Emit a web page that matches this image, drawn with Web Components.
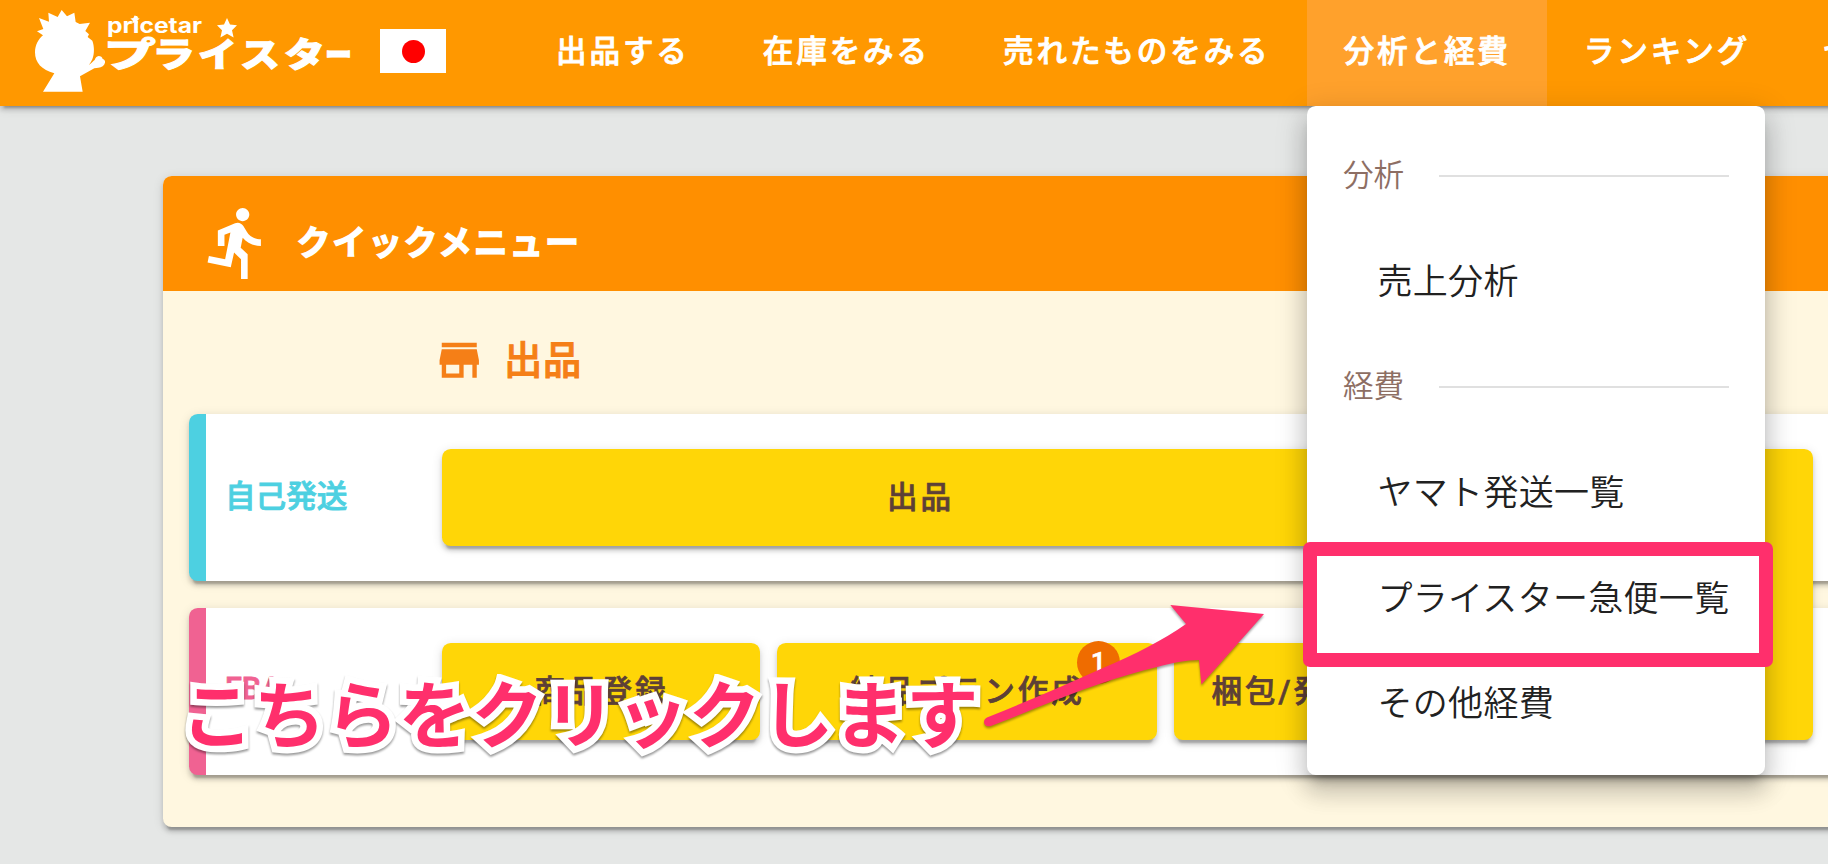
<!DOCTYPE html>
<html lang="ja">
<head>
<meta charset="utf-8">
<title>プライスター</title>
<style>
    html, body {
        margin: 0;
        height: 100%;
        overflow: hidden;
    }
    body {
        background-color: #e5e7e6;
        font-family: Roboto, "Noto Sans CJK JP", sans-serif;
        --accent: #ff2f6c;
        --scale-shadow: 0 6.5px 2px -4.4px rgba(0,0,0,.2), 0 4.4px 4.4px rgba(0,0,0,.14), 0 2px 11px rgba(0,0,0,.12);
    }
</style>
</head>
<body>
<price-app></price-app>

<script>
class PriceLogoComponent extends HTMLElement
{
    constructor()
    {
        super();
        this.shadow = this.attachShadow({mode: "open" })
    }
    connectedCallback()
    {
        this.render();
    }
    style ()
    {
        return `
            <style>
                :host {
                    display: flex;
                    align-items: flex-start;
                    gap: 28px;
                    width: 519px;
                    flex: none;
                }
                .logo {
                    display: block;
                    width: 352px;
                    height: 106px;
                }
                .flag {
                    display: flex;
                    align-items: center;
                    justify-content: center;
                    width: 66px;
                    height: 44px;
                    margin-top: 29px;
                    background-color: #ffffff;
                }
                .flag i {
                    width: 23px;
                    height: 23px;
                    border-radius: 50%;
                    background-color: #ff0000;
                }
            </style>
        `;
    }
    render()
    {
        this.shadow.innerHTML = `
            ${this.style()}
            <svg class="logo" viewBox="0 0 352 106" fill="#ffffff">
                <path transform="translate(25 0) scale(.3333)" d="M54 275L88 220C50 210 30 188 30 157C30 136 40 118 54 106L36 94L55 87L42 54L72 65L70 38L98 51L110 30L126 49L148 38L152 66L164 72L195 68L181 93L192 103L188 111L202 122C208 138 209 160 202 178C196 192 186 203 176 208L200 188C205 184 206 182 209 180C211 174 215 169 221 168C227 168 232 172 233 177C239 179 241 183 240 188C238 197 230 202 220 203L208 205L165 229L173 275Z"/>
                <text x="107" y="32.5" font-family="Inter, sans-serif" font-weight="700" font-size="20.5" textLength="95" lengthAdjust="spacingAndGlyphs">pricetar</text>
                <path d="M135 15l1.500 3 3.200.4-2.300 2.100.5 3-2.900-1.400-2.800 1.400.5-3-2.300-2.100 3.100-.4z"/>
                <path d="M227 18l3 6.600 7 .6-5 5 1.600 7.400-6.600-3.800-6.600 3.800 1.600-7.400-5-5 7-.6z"/>
                <text y="67" font-family="'Noto Sans CJK JP', sans-serif" font-weight="900" font-size="34" stroke="#ffffff" stroke-width="1"><tspan x="104" textLength="52" lengthAdjust="spacingAndGlyphs">プ</tspan><tspan x="152" textLength="43" lengthAdjust="spacingAndGlyphs">ラ</tspan><tspan x="198" textLength="39" lengthAdjust="spacingAndGlyphs">イ</tspan><tspan x="240" textLength="40" lengthAdjust="spacingAndGlyphs">ス</tspan><tspan x="284" textLength="41" lengthAdjust="spacingAndGlyphs">タ</tspan><tspan x="325" textLength="27" lengthAdjust="spacingAndGlyphs">ー</tspan></text>
            </svg>
            <div class="flag"><i></i></div>
        `
    }
}
customElements.define('price-logo', PriceLogoComponent);

class NavTabComponent extends HTMLElement
{
    constructor()
    {
        super();
        this.shadow = this.attachShadow({mode: "open" })
    }
    connectedCallback()
    {
        this.render();
    }
    style ()
    {
        return `
            <style>
                :host {
                    display: flex;
                    flex: none;
                    box-sizing: border-box;
                    height: 106px;
                    padding: 0 36px 9px 37px;
                    align-items: center;
                    color: #ffffff;
                    font-size: 30.6px;
                    font-weight: 500;
                    letter-spacing: 2.85px;
                    white-space: nowrap;
                    -webkit-text-stroke: .8px currentColor;
                }
                :host([active]) {
                    background-color: #ffa12c;
                }
            </style>
        `;
    }
    render()
    {
        this.shadow.innerHTML = `
            ${this.style()}
            <slot></slot>
        `
    }
}
customElements.define('nav-tab', NavTabComponent);

class AppHeaderComponent extends HTMLElement
{
    constructor()
    {
        super();
        this.shadow = this.attachShadow({mode: "open" })
    }
    connectedCallback()
    {
        this.render();
    }
    style ()
    {
        return `
            <style>
                :host {
                    display: flex;
                    width: calc(100% + 12px);
                    height: 106px;
                    background-color: #ff9800;
                    box-shadow: var(--scale-shadow);
                }
            </style>
        `;
    }
    render()
    {
        this.shadow.innerHTML = `
            ${this.style()}
            <price-logo></price-logo>
            <slot></slot>
        `
    }
}
customElements.define('app-header', AppHeaderComponent);

class QuickButtonComponent extends HTMLElement
{
    constructor()
    {
        super();
        this.shadow = this.attachShadow({mode: "open" })
    }
    connectedCallback()
    {
        this.render();
    }
    style ()
    {
        return `
            <style>
                :host {
                    display: flex;
                    position: relative;
                    flex: none;
                    box-sizing: border-box;
                    height: 97px;
                    padding: 0 0 6px 1px;
                    align-items: center;
                    justify-content: center;
                    border-radius: 8.7px;
                    background-color: #ffd607;
                    color: #5d4037;
                    font-size: 30.6px;
                    font-weight: 500;
                    letter-spacing: 2.9px;
                    white-space: nowrap;
                    -webkit-text-stroke: .7px currentColor;
                    box-shadow: var(--scale-shadow);
                }
                .badge {
                    position: absolute;
                    top: -2px;
                    right: 37px;
                    width: 43px;
                    height: 43px;
                    border-radius: 50%;
                    background-color: #ef6c00;
                    color: #ffffff;
                    font-size: 26px;
                    line-height: 42px;
                    letter-spacing: 0;
                    text-align: center;
                }
            </style>
        `;
    }
    render()
    {
        const badge = this.getAttribute('badge');
        this.shadow.innerHTML = `
            ${this.style()}
            <slot></slot>
            ${badge ? `<div class="badge">${badge}</div>` : ''}
        `
    }
}
customElements.define('quick-button', QuickButtonComponent);

class QuickRowComponent extends HTMLElement
{
    constructor()
    {
        super();
        this.shadow = this.attachShadow({mode: "open" })
    }
    connectedCallback()
    {
        this.render();
    }
    style ()
    {
        return `
            <style>
                :host {
                    display: flex;
                    box-sizing: border-box;
                    height: 167px;
                    align-items: center;
                    border-left: 17px solid var(--row-color);
                    border-radius: 8.7px;
                    background-color: #ffffff;
                    box-shadow: var(--scale-shadow);
                }
                .label {
                    box-sizing: border-box;
                    width: 236px;
                    padding: 0 0 7px 19px;
                    color: var(--row-color);
                    font-size: 30.6px;
                    font-weight: 500;
                    -webkit-text-stroke: .8px currentColor;
                }
                .buttons {
                    display: flex;
                    gap: 17px;
                }
            </style>
        `;
    }
    render()
    {
        this.shadow.innerHTML = `
            ${this.style()}
            <div class="label">${this.getAttribute('label')}</div>
            <div class="buttons"><slot></slot></div>
        `
    }
}
customElements.define('quick-row', QuickRowComponent);

class QuickMenuComponent extends HTMLElement
{
    constructor()
    {
        super();
        this.shadow = this.attachShadow({mode: "open" })
    }
    connectedCallback()
    {
        this.render();
    }
    style ()
    {
        return `
            <style>
                :host {
                    display: flex;
                    flex-direction: column;
                    width: 1720px;
                    height: 651px;
                    margin: 70px 0 0 163px;
                    border-radius: 8.7px;
                    background-color: #fff7e0;
                    box-shadow: var(--scale-shadow);
                }
                .title {
                    display: flex;
                    box-sizing: border-box;
                    height: 115px;
                    padding: 18px 0 0 35px;
                    align-items: center;
                    gap: 19px;
                    border-radius: 8.7px 8.7px 0 0;
                    background-color: #ff8f00;
                    color: #ffffff;
                    font-size: 34px;
                    font-weight: bold;
                    letter-spacing: 1.7px;
                }
                .title span {
                    padding-bottom: 5px;
                    -webkit-text-stroke: 1.4px #ffffff;
                    stroke-linejoin: round;
                }
                .column {
                    display: flex;
                    box-sizing: border-box;
                    height: 123px;
                    padding: 15px 0 0 270px;
                    align-items: center;
                    gap: 18.5px;
                    color: #f57f17;
                    font-size: 38.3px;
                    font-weight: 500;
                    letter-spacing: .8px;
                }
                .column span {
                    padding-bottom: 5px;
                    -webkit-text-stroke: 1px currentColor;
                }
                svg {
                    display: block;
                    fill: currentColor;
                }
                .rows {
                    display: grid;
                    grid-template-columns: 1226px 398px 1fr;
                    grid-template-rows: 167px 167px;
                    row-gap: 27px;
                    padding-left: 26px;
                }
                ::slotted(quick-row:nth-of-type(1)) {
                    grid-area: 1 / 1 / 2 / 4;
                }
                ::slotted(quick-row:nth-of-type(2)) {
                    grid-area: 2 / 1 / 3 / 4;
                }
                ::slotted(quick-button) {
                    grid-area: 1 / 2 / 3 / 3;
                    height: 291px;
                    margin-top: 35px;
                }
            </style>
        `;
    }
    render()
    {
        this.shadow.innerHTML = `
            ${this.style()}
            <div class="title">
                <svg width="79.5" height="79.5" viewBox="0 0 24 24"><path d="M13.490 5.480c1.100 0 2-.9 2-2s-.9-2-2-2-2 .9-2 2 .9 2 2 2zm-3.600 13.900l1-4.400 2.100 2v6h2v-7.500l-2.100-2 .6-3c1.300 1.500 3.300 2.500 5.500 2.500v-2c-1.900 0-3.500-1-4.300-2.400l-1-1.600c-.4-.6-1-1-1.700-1-.3 0-.5.1-.8.1l-5.200 2.200v4.700h2v-3.400l1.800-.7-1.600 8.100-4.900-1-.4 2 7 1.400z"/></svg>
                <span>クイックメニュー</span>
            </div>
            <div class="column">
                <svg width="52.5" height="52.5" viewBox="0 0 24 24"><path d="M20 4H4v2h16V4zm1 10v-2l-1-5H4l-1 5v2h1v6h10v-6h4v6h2v-6h1zm-9 4H6v-4h6v4z"/></svg>
                <span>出品</span>
            </div>
            <div class="rows"><slot></slot></div>
        `
    }
}
customElements.define('quick-menu', QuickMenuComponent);

class MenuLabelComponent extends HTMLElement
{
    constructor()
    {
        super();
        this.shadow = this.attachShadow({mode: "open" })
    }
    connectedCallback()
    {
        this.render();
    }
    style ()
    {
        return `
            <style>
                :host {
                    display: flex;
                    box-sizing: border-box;
                    height: 105.6px;
                    align-items: center;
                    gap: 35px;
                    padding: 0 36px 0 36px;
                    color: #8d6e63;
                    font-size: 30.6px;
                    font-weight: 350;
                }
                span {
                    padding-bottom: 7px;
                }
                hr {
                    flex: 1;
                    height: 2px;
                    margin: 0;
                    border: 0;
                    background-color: #e0e0e0;
                }
            </style>
        `;
    }
    render()
    {
        this.shadow.innerHTML = `
            ${this.style()}
            <span><slot></slot></span><hr>
        `
    }
}
customElements.define('menu-label', MenuLabelComponent);

class MenuItemComponent extends HTMLElement
{
    constructor()
    {
        super();
        this.shadow = this.attachShadow({mode: "open" })
    }
    connectedCallback()
    {
        this.render();
    }
    style ()
    {
        return `
            <style>
                :host {
                    display: flex;
                    position: relative;
                    box-sizing: border-box;
                    height: 105.6px;
                    align-items: center;
                    padding: 0 0 7px 70.5px;
                    color: #212121;
                    font-size: 35px;
                    font-weight: 350;
                    letter-spacing: .3px;
                    white-space: nowrap;
                }
                .frame {
                    position: absolute;
                    box-sizing: border-box;
                    top: -4px;
                    left: -4px;
                    width: 470px;
                    height: 125px;
                    border: 14px solid var(--accent);
                    border-radius: 7px;
                }
            </style>
        `;
    }
    render()
    {
        this.shadow.innerHTML = `
            ${this.style()}
            <slot></slot>
            ${this.hasAttribute('framed') ? '<div class="frame"></div>' : ''}
        `
    }
}
customElements.define('menu-item', MenuItemComponent);

class DropMenuComponent extends HTMLElement
{
    constructor()
    {
        super();
        this.shadow = this.attachShadow({mode: "open" })
    }
    connectedCallback()
    {
        this.render();
    }
    style ()
    {
        return `
            <style>
                :host {
                    display: flex;
                    flex-direction: column;
                    position: absolute;
                    box-sizing: border-box;
                    top: 106px;
                    left: 1307px;
                    width: 458px;
                    height: 669px;
                    padding: 17.5px 0;
                    border-radius: 8.7px;
                    background-color: #ffffff;
                    box-shadow: 0 11px 11px -6.5px rgba(0,0,0,.2), 0 17.5px 22px 2px rgba(0,0,0,.14), 0 6.5px 30px 4.4px rgba(0,0,0,.12);
                }
            </style>
        `;
    }
    render()
    {
        this.shadow.innerHTML = `
            ${this.style()}
            <slot></slot>
        `
    }
}
customElements.define('drop-menu', DropMenuComponent);

class CalloutNoteComponent extends HTMLElement
{
    constructor()
    {
        super();
        this.shadow = this.attachShadow({mode: "open" })
    }
    connectedCallback()
    {
        this.render();
    }
    style ()
    {
        return `
            <style>
                :host {
                    position: absolute;
                    top: 590px;
                    left: 181px;
                    width: 1100px;
                    height: 180px;
                }
                .text {
                    position: absolute;
                    top: 76px;
                    left: 0;
                    color: var(--accent);
                    font-size: 72.5px;
                    font-weight: bold;
                    line-height: 104px;
                    white-space: nowrap;
                    -webkit-text-stroke: 13px #ffffff;
                    paint-order: stroke fill;
                    stroke-linejoin: round;
                    filter: drop-shadow(0 2px 1px rgba(0,0,0,.4));
                }
                svg {
                    position: absolute;
                    top: 0;
                    left: 0;
                    fill: var(--accent);
                    filter: drop-shadow(0 2px 1px rgba(0,0,0,.35));
                }
            </style>
        `;
    }
    render()
    {
        this.shadow.innerHTML = `
            ${this.style()}
            <div class="text"><slot></slot></div>
            <svg width="1100" height="180" viewBox="181 590 1100 180">
                <path d="M1264 614L1170.300 605L1186 624C1163 640 1136 654 1103 668C1065 685 1026 702 987 717.500C981 721 985 728 991 726C1010 719 1026 712 1041 706C1083 689 1120 676 1157 667C1172 663 1186 660 1199 660L1201.400 684.500Z"/>
            </svg>
        `
    }
}
customElements.define('callout-note', CalloutNoteComponent);

class PriceAppComponent extends HTMLElement
{
    constructor()
    {
        super();
        this.shadow = this.attachShadow({mode: "open" })
    }
    connectedCallback()
    {
        this.render();
    }
    style ()
    {
        return `
            <style>
                :host {
                    display: block;
                    position: relative;
                    width: 100%;
                    height: 100%;
                    overflow: hidden;
                }
                .own {
                    --row-color: #4dd0e1;
                }
                .fba {
                    --row-color: #f06292;
                }
            </style>
        `;
    }
    render()
    {
        this.shadow.innerHTML = `
            ${this.style()}
            <app-header>
                <nav-tab>出品する</nav-tab>
                <nav-tab>在庫をみる</nav-tab>
                <nav-tab>売れたものをみる</nav-tab>
                <nav-tab active>分析と経費</nav-tab>
                <nav-tab>ランキング</nav-tab>
                <nav-tab>セ</nav-tab>
            </app-header>
            <quick-menu>
                <quick-row class="own" label="自己発送">
                    <quick-button style="width: 956px">出品</quick-button>
                </quick-row>
                <quick-row class="fba" label="FBA">
                    <quick-button style="width: 318px">商品登録</quick-button>
                    <quick-button style="width: 380px" badge="1">納品プラン作成</quick-button>
                    <quick-button style="width: 223px">梱包/発送</quick-button>
                </quick-row>
                <quick-button></quick-button>
            </quick-menu>
            <drop-menu>
                <menu-label>分析</menu-label>
                <menu-item>売上分析</menu-item>
                <menu-label>経費</menu-label>
                <menu-item>ヤマト発送一覧</menu-item>
                <menu-item framed>プライスター急便一覧</menu-item>
                <menu-item>その他経費</menu-item>
            </drop-menu>
            <callout-note>こちらをクリックします</callout-note>
        `
    }
}
customElements.define('price-app', PriceAppComponent);
</script>
</body>
</html>
